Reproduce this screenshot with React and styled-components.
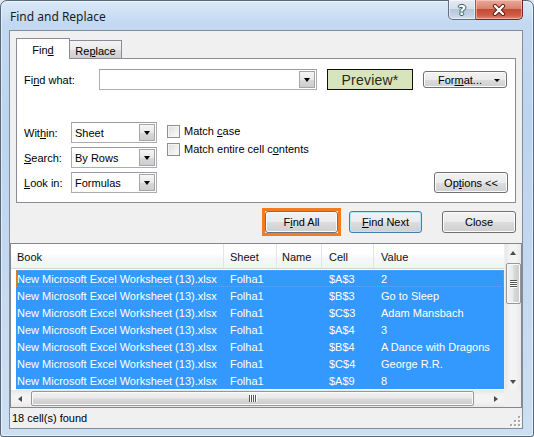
import React from 'react';
import styled, { createGlobalStyle, css } from 'styled-components';

const Global = createGlobalStyle`
  html, body { margin: 0; padding: 0; width: 534px; height: 437px; overflow: hidden; background: #dfe7ef; }
  body { font-family: "Liberation Sans", Arial, sans-serif; font-size: 11px; color: #000; }
  * { box-sizing: border-box; }
`;

const Window = styled.div`
  width: 534px;
  height: 437px;
  display: flex;
  flex-direction: column;
  padding: 0 10px 7px 8px;
  border: 1px solid #55677d;
  border-radius: 7px 7px 3px 3px;
  background: linear-gradient(180deg, #dbe9f8 0px, #c3d9f1 22px, #bcd4ee 120px, #c6daf0 300px, #cddff2 437px);
  box-shadow: inset 0 0 0 1px rgba(255, 255, 255, 0.55);
`;

const TitleBar = styled.div`
  height: 29px;
  display: flex;
  align-items: center;
`;

const Title = styled.div`
  padding-left: 1px;
  font-family: "Noto Sans", "Open Sans", sans-serif;
  font-size: 12px;
  color: #1b1b1b;
  margin-top: 1px;
`;

const Caption = styled.div`
  margin-left: auto;
  align-self: flex-start;
  margin-top: -1px;
  display: flex;
`;

const CapBtn = styled.div`
  height: 20px;
  display: flex;
  align-items: center;
  justify-content: center;
  border: 1px solid #5f6f83;
  border-top: none;
  ${p => p.$close ? css`
    width: 47px;
    border-color: #6e2b22;
    border-left: none;
    border-radius: 0 0 5px 0;
    background: linear-gradient(180deg, #e9a99b 0%, #d9826f 45%, #c44a35 50%, #cf5b45 80%, #e08a6e 100%);
    box-shadow: inset 0 0 0 1px rgba(255, 220, 210, 0.5);
  ` : css`
    width: 28px;
    border-radius: 0 0 0 5px;
    background: linear-gradient(180deg, #e3ebf4 0%, #d3dfeb 45%, #b7c8da 50%, #c3d3e4 80%, #d3e0ec 100%);
    box-shadow: inset 0 0 0 1px rgba(255, 255, 255, 0.5);
  `}
`;

const Help = styled.span`
  font-family: "DejaVu Sans", sans-serif;
  font-weight: bold;
  font-size: 14px;
  color: #fff;
  line-height: 1;
  text-shadow: 0 0 1px #2b3a4c, 1px 0 0 #4a5a6e, -1px 0 0 #4a5a6e, 0 1px 0 #4a5a6e, 0 -1px 0 #4a5a6e;
`;

const Client = styled.div`
  flex: 1;
  display: flex;
  flex-direction: column;
  border: 1px solid #838c99;
  background: #f0f0f0;
`;

const TabStrip = styled.div`
  display: flex;
  align-items: flex-end;
  height: 20px;
  margin: 7px 0 0 6px;
  position: relative;
  z-index: 1;
`;

const Tab = styled.div`
  display: flex;
  align-items: center;
  justify-content: center;
  border: 1px solid #898c95;
  border-bottom: none;
  ${p => p.$active ? css`
    width: 54px;
    height: 21px;
    margin-bottom: -1px;
    background: #fff;
    padding-top: 1px;
  ` : css`
    width: 53px;
    height: 18px;
    margin-left: -1px;
    background: linear-gradient(180deg, #f3f3f3 0%, #ebebeb 50%, #dddddd 51%, #cfcfcf 100%);
    padding-top: 2px;
  `}
`;

const U = styled.span`
  text-decoration: underline;
`;

const Panel = styled.div`
  margin: 0 6px;
  height: 145px;
  border: 1px solid #898c95;
  background: #fff;
  padding: 10px 7px 9px 7px;
  display: flex;
  flex-direction: column;
`;

const FindRow = styled.div`
  display: flex;
  align-items: center;
  height: 21px;
`;

const Label = styled.div`
  width: ${p => p.$w}px;
  flex: none;
`;

const Combo = styled.div`
  width: ${p => p.$w}px;
  height: 21px;
  flex: none;
  border: 1px solid #abadb3;
  border-top-color: #9a9ca3;
  background: #fff;
  display: flex;
  align-items: center;
  padding: 1px;
`;

const ComboText = styled.div`
  flex: 1;
  padding-left: 2px;
`;

const DropBtn = styled.div`
  width: 16px;
  height: 100%;
  flex: none;
  border: 1px solid #a5a5a5;
  background: linear-gradient(180deg, #f6f6f6 0%, #e8e8e8 50%, #d9d9d9 51%, #cdcdcd 100%);
  display: flex;
  align-items: center;
  justify-content: center;
  &::after {
    content: "";
    border-left: 3.5px solid transparent;
    border-right: 3.5px solid transparent;
    border-top: 4px solid #000;
  }
`;

const Preview = styled.div`
  width: 86px;
  height: 21px;
  margin-left: 10px;
  flex: none;
  border: 1px solid #111;
  background: #d8e4bc;
  display: flex;
  align-items: center;
  justify-content: center;
  font-size: 14px;
  color: #2a2a1a;
  letter-spacing: 0.2px;
`;

const Button = styled.div`
  width: ${p => p.$w}px;
  height: ${p => p.$h || 22}px;
  flex: none;
  display: flex;
  align-items: center;
  justify-content: center;
  border: 1px solid ${p => p.$default ? '#3c7fb1' : '#707070'};
  border-radius: 3px;
  background: linear-gradient(180deg, #f2f2f2 0%, #ebebeb 50%, #dddddd 51%, #cfcfcf 100%);
  box-shadow: inset 0 0 0 1px ${p => p.$default ? '#b7e5fa' : '#fcfcfc'};
  color: #000;
`;

const FormatBtn = styled(Button)`
  margin-left: 10px;
  position: relative;
  padding-right: 10px;
  &::after {
    content: "";
    position: absolute;
    right: 6px;
    top: 7px;
    border-left: 3px solid transparent;
    border-right: 3px solid transparent;
    border-top: 3px solid #000;
  }
`;

const OptionsArea = styled.div`
  display: flex;
  margin-top: 32px;
  height: 71px;
`;

const FieldGrid = styled.div`
  display: grid;
  grid-template-columns: 47px 86px;
  grid-auto-rows: 21px;
  row-gap: 4px;
  align-items: center;
`;

const Checks = styled.div`
  margin-left: 10px;
  display: flex;
  flex-direction: column;
`;

const CheckRow = styled.div`
  height: 18px;
  display: flex;
  align-items: center;
  gap: 4px;
`;

const Box = styled.div`
  width: 13px;
  height: 13px;
  border: 1px solid #8f8f8f;
  background: linear-gradient(135deg, #dcdcdc 0%, #f0f0f0 60%, #fbfbfb 100%);
  box-shadow: inset 0 0 0 1px #f4f4f4;
`;

const OptionsBtn = styled(Button)`
  margin-left: auto;
  align-self: flex-end;
`;

const ActionRow = styled.div`
  display: flex;
  justify-content: flex-end;
  align-items: center;
  margin-top: 5px;
  height: 28px;
  padding-right: 6px;
`;

const Highlight = styled.div`
  border: 3px solid #f47b20;
  display: flex;
`;

const List = styled.div`
  margin-top: 7px;
  height: 165px;
  border: 1px solid #828790;
  background: #fff;
  display: flex;
  flex-direction: column;
`;

const ListBody = styled.div`
  height: 146px;
  display: flex;
`;

const ListMain = styled.div`
  width: 493px;
  display: flex;
  flex-direction: column;
`;

const Header = styled.div`
  height: 25px;
  display: grid;
  grid-template-columns: 213px 53px 45px 52px 1fr;
  background: linear-gradient(180deg, #ffffff 0%, #ffffff 40%, #f6f7f8 60%, #f2f3f5 100%);
  border-bottom: 1px solid #d5d5d5;
`;

const HCell = styled.div`
  display: flex;
  align-items: center;
  padding-left: ${p => p.$pad}px;
  border-right: ${p => p.$last ? 'none' : '1px solid #e3e5e8'};
  color: #111;
  padding-top: 1px;
`;

const Rows = styled.div`
  padding: 1px 0 0 5px;
  display: flex;
  flex-direction: column;
`;

const Row = styled.div`
  width: 488px;
  height: 17px;
  display: grid;
  grid-template-columns: 208px 53px 45px 52px 1fr;
  background: #3399ff;
  color: #fff;
  ${p => p.$focus && css`
    outline: 1px dotted #e1883a;
    outline-offset: -1px;
  `}
`;

const Cell = styled.div`
  display: flex;
  align-items: center;
  padding-left: ${p => p.$pad}px;
  white-space: nowrap;
  overflow: hidden;
`;

const VScroll = styled.div`
  width: 17px;
  display: flex;
  flex-direction: column;
  align-items: center;
  background: linear-gradient(90deg, #e6e6e6 0%, #f3f3f3 30%, #f3f3f3 70%, #e9e9e9 100%);
  border-left: 1px solid #f0f0f0;
`;

const Arrow = styled.div`
  width: 17px;
  height: 17px;
  flex: none;
  display: flex;
  align-items: center;
  justify-content: center;
  &::after {
    content: "";
    ${p => p.$dir === 'up' && css`
      border-left: 3.5px solid transparent;
      border-right: 3.5px solid transparent;
      border-bottom: 4px solid #4b4b4b;
    `}
    ${p => p.$dir === 'down' && css`
      border-left: 3.5px solid transparent;
      border-right: 3.5px solid transparent;
      border-top: 4px solid #4b4b4b;
    `}
    ${p => p.$dir === 'left' && css`
      border-top: 3.5px solid transparent;
      border-bottom: 3.5px solid transparent;
      border-right: 4px solid #4b4b4b;
    `}
    ${p => p.$dir === 'right' && css`
      border-top: 3.5px solid transparent;
      border-bottom: 3.5px solid transparent;
      border-left: 4px solid #4b4b4b;
    `}
  }
`;

const VThumb = styled.div`
  width: 15px;
  height: 41px;
  margin-top: 2px;
  border: 1px solid #979797;
  border-radius: 2px;
  background: linear-gradient(90deg, #f3f3f3 0%, #e9e9e9 45%, #d8d8d8 55%, #cbcbcb 100%);
  box-shadow: inset 0 0 0 1px #fafafa;
  display: flex;
  flex-direction: column;
  align-items: center;
  justify-content: center;
  gap: 1px;
`;

const GripLine = styled.div`
  width: ${p => p.$v ? '1px' : '7px'};
  height: ${p => p.$v ? '7px' : '1px'};
  background: #555;
  box-shadow: ${p => p.$v ? '1px 0 0 #fff' : '0 1px 0 #fff'};
`;

const Spacer = styled.div`
  flex: 1;
`;

const HScrollRow = styled.div`
  height: 17px;
  display: flex;
`;

const HScroll = styled.div`
  width: 493px;
  display: flex;
  align-items: center;
  background: linear-gradient(180deg, #e6e6e6 0%, #f3f3f3 30%, #f3f3f3 70%, #e9e9e9 100%);
`;

const HThumb = styled.div`
  width: 443px;
  height: 15px;
  margin-left: 3px;
  border: 1px solid #979797;
  border-radius: 2px;
  background: linear-gradient(180deg, #f3f3f3 0%, #e9e9e9 45%, #d8d8d8 55%, #cbcbcb 100%);
  box-shadow: inset 0 0 0 1px #fafafa;
  display: flex;
  align-items: center;
  justify-content: center;
  gap: 1px;
`;

const Corner = styled.div`
  flex: 1;
  background: #f0f0f0;
`;

const StatusBar = styled.div`
  height: 20px;
  display: flex;
  align-items: center;
  padding-left: 2px;
  background: #f0f0f0;
`;

const Grip = styled.svg`
  margin-left: auto;
  align-self: flex-end;
  margin-right: 1px;
  margin-bottom: 1px;
`;

const rows = [
  ['$A$3', '2'],
  ['$B$3', 'Go to Sleep'],
  ['$C$3', 'Adam Mansbach'],
  ['$A$4', '3'],
  ['$B$4', 'A Dance with Dragons'],
  ['$C$4', 'George R.R.'],
  ['$A$9', '8'],
];

export default function App() {
  return (
    <>
      <Global />
      <Window>
        <TitleBar>
          <Title>Find and Replace</Title>
          <Caption>
            <CapBtn><Help>?</Help></CapBtn>
            <CapBtn $close>
              <svg width="14" height="12" viewBox="0 0 14 12">
                <path d="M3 2 L11 10 M11 2 L3 10" stroke="#5a1d14" strokeWidth="4.2" strokeLinecap="round" />
                <path d="M3 2 L11 10 M11 2 L3 10" stroke="#fff" strokeWidth="2.4" strokeLinecap="round" />
              </svg>
            </CapBtn>
          </Caption>
        </TitleBar>
        <Client>
          <TabStrip>
            <Tab $active>Fin<U>d</U></Tab>
            <Tab>Re<U>p</U>lace</Tab>
          </TabStrip>
          <Panel>
            <FindRow>
              <Label $w={75}>Fi<U>n</U>d what:</Label>
              <Combo $w={218}>
                <ComboText />
                <DropBtn />
              </Combo>
              <Preview>Preview*</Preview>
              <FormatBtn $w={84} $h={17}>For<U>m</U>at...</FormatBtn>
            </FindRow>
            <OptionsArea>
              <FieldGrid>
                <Label $w={47}>Wit<U>h</U>in:</Label>
                <Combo $w={86}><ComboText>Sheet</ComboText><DropBtn /></Combo>
                <Label $w={47}><U>S</U>earch:</Label>
                <Combo $w={86}><ComboText>By Rows</ComboText><DropBtn /></Combo>
                <Label $w={47}><U>L</U>ook in:</Label>
                <Combo $w={86}><ComboText>Formulas</ComboText><DropBtn /></Combo>
              </FieldGrid>
              <Checks>
                <CheckRow><Box /><span>Match <U>c</U>ase</span></CheckRow>
                <CheckRow><Box /><span>Match entire cell c<U>o</U>ntents</span></CheckRow>
              </Checks>
              <OptionsBtn $w={74} $h={21}>Op<U>t</U>ions &lt;&lt;</OptionsBtn>
            </OptionsArea>
          </Panel>
          <ActionRow>
            <Highlight>
              <Button $w={73}>F<U>i</U>nd All</Button>
            </Highlight>
            <Button $w={73} $default style={{ marginLeft: 8 }}><U>F</U>ind Next</Button>
            <Button $w={74} style={{ marginLeft: 20 }}>Close</Button>
          </ActionRow>
          <List>
            <ListBody>
              <ListMain>
                <Header>
                  <HCell $pad={6}>Book</HCell>
                  <HCell $pad={6}>Sheet</HCell>
                  <HCell $pad={5}>Name</HCell>
                  <HCell $pad={7}>Cell</HCell>
                  <HCell $pad={7} $last>Value</HCell>
                </Header>
                <Rows>
                  {rows.map((r, i) => (
                    <Row key={i} $focus={i === 0}>
                      <Cell $pad={1}>New Microsoft Excel Worksheet (13).xlsx</Cell>
                      <Cell $pad={6}>Folha1</Cell>
                      <Cell $pad={5}></Cell>
                      <Cell $pad={7}>{r[0]}</Cell>
                      <Cell $pad={7}>{r[1]}</Cell>
                    </Row>
                  ))}
                </Rows>
              </ListMain>
              <VScroll>
                <Arrow $dir="up" />
                <VThumb>
                  <GripLine /><GripLine /><GripLine /><GripLine />
                </VThumb>
                <Spacer />
                <Arrow $dir="down" />
              </VScroll>
            </ListBody>
            <HScrollRow>
              <HScroll>
                <Arrow $dir="left" />
                <HThumb>
                  <GripLine $v /><GripLine $v /><GripLine $v /><GripLine $v />
                </HThumb>
                <Spacer />
                <Arrow $dir="right" />
              </HScroll>
              <Corner />
            </HScrollRow>
          </List>
          <StatusBar>
            <span>18 cell(s) found</span>
            <Grip width="12" height="12" viewBox="0 0 12 12">
              {[[9, 1], [9, 5], [5, 5], [9, 9], [5, 9], [1, 9]].map(([x, y], i) => (
                <g key={i}>
                  <rect x={x + 1} y={y + 1} width="2" height="2" fill="#fff" />
                  <rect x={x} y={y} width="2" height="2" fill="#a9a9a9" />
                </g>
              ))}
            </Grip>
          </StatusBar>
        </Client>
      </Window>
    </>
  );
}
